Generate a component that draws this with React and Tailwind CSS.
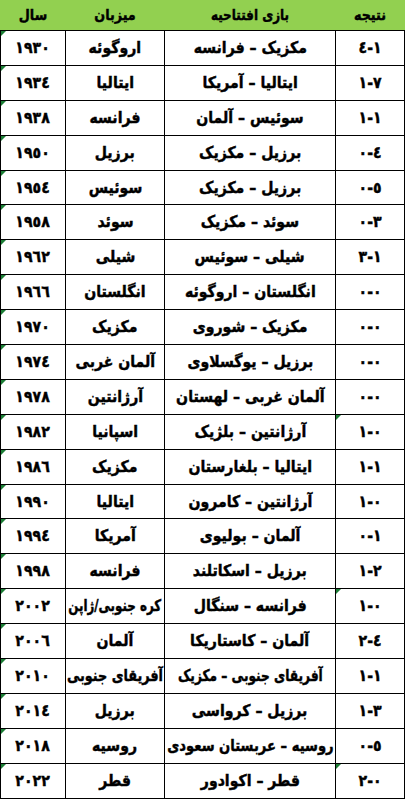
import React from "react";

const rows = [
  ["1930", "اروگوئه", "مکزیک – فرانسه", "٤-١"],
  ["1934", "ایتالیا", "ایتالیا – آمریکا", "١-٧"],
  ["1938", "فرانسه", "سوئیس – آلمان", "١-١"],
  ["1950", "برزیل", "برزیل – مکزیک", "٠-٤"],
  ["1954", "سوئیس", "برزیل – مکزیک", "٠-٥"],
  ["1958", "سوئد", "سوئد – مکزیک", "٠-٣"],
  ["1962", "شیلی", "شیلی – سوئیس", "٣-١"],
  ["1966", "انگلستان", "انگلستان – اروگوئه", "٠-٠"],
  ["1970", "مکزیک", "مکزیک – شوروی", "٠-٠"],
  ["1974", "آلمان غربی", "برزیل – یوگسلاوی", "٠-٠"],
  ["1978", "آرژانتین", "آلمان غربی – لهستان", "٠-٠"],
  ["1982", "اسپانیا", "آرژانتین – بلژیک", "١-٠", true],
  ["1986", "مکزیک", "ایتالیا – بلغارستان", "١-١"],
  ["1990", "ایتالیا", "آرژانتین – کامرون", "١-٠"],
  ["1994", "آمریکا", "آلمان – بولیوی", "٠-١"],
  ["1998", "فرانسه", "برزیل – اسکاتلند", "١-٢"],
  ["2002", "کره جنوبی/ژاپن", "فرانسه – سنگال", "١-٠", true, "scale-x-[0.74]"],
  ["2006", "آلمان", "آلمان – کاستاریکا", "٢-٤"],
  ["2010", "آفریقای جنوبی", "آفریقای جنوبی – مکزیک", "١-١", false, "scale-x-[0.8]", "scale-x-[0.76]"],
  ["2014", "برزیل", "برزیل – کرواسی", "١-٣"],
  ["2018", "روسیه", "روسیه – عربستان سعودی", "٠-٥", false, null, "scale-x-[0.82]"],
  ["2022", "قطر", "قطر – اکوادور", "٢-٠", true],
];

const fa = (s) => s.replace(/[0-9]/g, (d) => "٠١٢٣٤٥٦٧٨٩"[d]);

const Flag = () => (
  <span className="absolute top-0 left-0 w-0 h-0 border-t-[5px] border-t-[#1b7d35] border-r-[5px] border-r-transparent" />
);

const Cell = ({ children, fit, flag }) => (
  <div className="relative bg-white flex items-center justify-center overflow-hidden">
    {flag && <Flag />}
    <span className={`inline-block whitespace-nowrap ${fit || "scale-x-[0.88]"}`}>{children}</span>
  </div>
);

export default function App() {
  return (
    <div dir="rtl" className="w-[405px] bg-white text-black font-bold font-['DejaVu_Sans',sans-serif] [-webkit-text-stroke:0.45px]">
      <div className="grid grid-cols-[68px_170px_98px_64px] gap-px px-px h-[30px] bg-[#92d050] text-[15px] items-center text-center">
        <div className="scale-x-[0.85]">نتیجه</div>
        <div className="scale-x-[0.8]">بازی افتتاحیه</div>
        <div className="scale-x-[0.85]">میزبان</div>
        <div className="scale-x-[0.85]">سال</div>
      </div>
      <div className="grid grid-cols-[68px_170px_98px_64px] auto-rows-[33.9px] gap-px p-px bg-black text-[16px]">
        {rows.map(([year, host, game, score, mark, hostFit, gameFit]) => (
          <React.Fragment key={year}>
            <Cell flag={mark}>
              <bdo dir="ltr">{score}</bdo>
            </Cell>
            <Cell fit={gameFit}>{game}</Cell>
            <Cell fit={hostFit}>{host}</Cell>
            <Cell flag>{fa(year)}</Cell>
          </React.Fragment>
        ))}
      </div>
    </div>
  );
}
